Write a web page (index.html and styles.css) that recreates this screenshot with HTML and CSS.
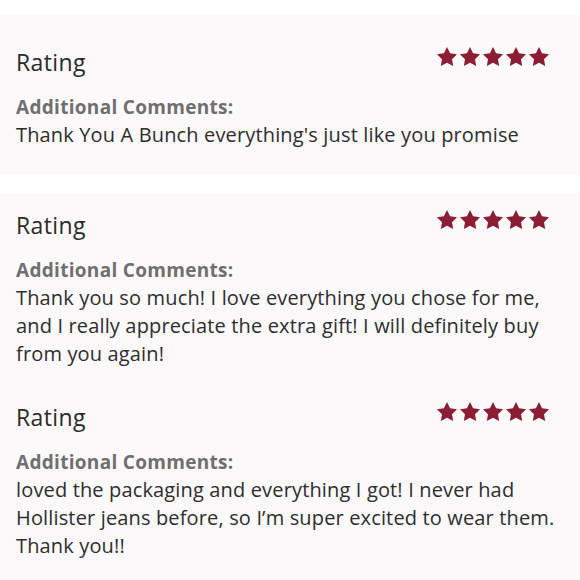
FILE: index.html
```html
<!DOCTYPE html>
<html>
<head>
<meta charset="utf-8">
<link rel="stylesheet" href="styles.css">
</head>
<body>
<section class="card card-first">
  <div class="review">
    <div class="rating-row">
      <span class="rating-label">Rating</span>
      <span class="stars">
        <svg viewBox="2 2 20 19"><polygon points="12,2 15.09,8.26 22,9.27 17,14.14 18.18,21.02 12,17.77 5.82,21.02 7,14.14 2,9.27 8.91,8.26"/></svg>
        <svg viewBox="2 2 20 19"><polygon points="12,2 15.09,8.26 22,9.27 17,14.14 18.18,21.02 12,17.77 5.82,21.02 7,14.14 2,9.27 8.91,8.26"/></svg>
        <svg viewBox="2 2 20 19"><polygon points="12,2 15.09,8.26 22,9.27 17,14.14 18.18,21.02 12,17.77 5.82,21.02 7,14.14 2,9.27 8.91,8.26"/></svg>
        <svg viewBox="2 2 20 19"><polygon points="12,2 15.09,8.26 22,9.27 17,14.14 18.18,21.02 12,17.77 5.82,21.02 7,14.14 2,9.27 8.91,8.26"/></svg>
        <svg viewBox="2 2 20 19"><polygon points="12,2 15.09,8.26 22,9.27 17,14.14 18.18,21.02 12,17.77 5.82,21.02 7,14.14 2,9.27 8.91,8.26"/></svg>
      </span>
    </div>
    <div class="comments-label">Additional Comments:</div>
    <p class="comment">Thank You A Bunch everything's just like you promise</p>
  </div>
</section>
<section class="card card-second">
  <div class="review">
    <div class="rating-row">
      <span class="rating-label">Rating</span>
      <span class="stars">
        <svg viewBox="2 2 20 19"><polygon points="12,2 15.09,8.26 22,9.27 17,14.14 18.18,21.02 12,17.77 5.82,21.02 7,14.14 2,9.27 8.91,8.26"/></svg>
        <svg viewBox="2 2 20 19"><polygon points="12,2 15.09,8.26 22,9.27 17,14.14 18.18,21.02 12,17.77 5.82,21.02 7,14.14 2,9.27 8.91,8.26"/></svg>
        <svg viewBox="2 2 20 19"><polygon points="12,2 15.09,8.26 22,9.27 17,14.14 18.18,21.02 12,17.77 5.82,21.02 7,14.14 2,9.27 8.91,8.26"/></svg>
        <svg viewBox="2 2 20 19"><polygon points="12,2 15.09,8.26 22,9.27 17,14.14 18.18,21.02 12,17.77 5.82,21.02 7,14.14 2,9.27 8.91,8.26"/></svg>
        <svg viewBox="2 2 20 19"><polygon points="12,2 15.09,8.26 22,9.27 17,14.14 18.18,21.02 12,17.77 5.82,21.02 7,14.14 2,9.27 8.91,8.26"/></svg>
      </span>
    </div>
    <div class="comments-label">Additional Comments:</div>
    <p class="comment">Thank you so much! I love everything you chose for me,<br>and I really appreciate the extra gift! I will definitely buy<br>from you again!</p>
  </div>
  <div class="review">
    <div class="rating-row">
      <span class="rating-label">Rating</span>
      <span class="stars">
        <svg viewBox="2 2 20 19"><polygon points="12,2 15.09,8.26 22,9.27 17,14.14 18.18,21.02 12,17.77 5.82,21.02 7,14.14 2,9.27 8.91,8.26"/></svg>
        <svg viewBox="2 2 20 19"><polygon points="12,2 15.09,8.26 22,9.27 17,14.14 18.18,21.02 12,17.77 5.82,21.02 7,14.14 2,9.27 8.91,8.26"/></svg>
        <svg viewBox="2 2 20 19"><polygon points="12,2 15.09,8.26 22,9.27 17,14.14 18.18,21.02 12,17.77 5.82,21.02 7,14.14 2,9.27 8.91,8.26"/></svg>
        <svg viewBox="2 2 20 19"><polygon points="12,2 15.09,8.26 22,9.27 17,14.14 18.18,21.02 12,17.77 5.82,21.02 7,14.14 2,9.27 8.91,8.26"/></svg>
        <svg viewBox="2 2 20 19"><polygon points="12,2 15.09,8.26 22,9.27 17,14.14 18.18,21.02 12,17.77 5.82,21.02 7,14.14 2,9.27 8.91,8.26"/></svg>
      </span>
    </div>
    <div class="comments-label">Additional Comments:</div>
    <p class="comment">loved the packaging and everything I got! I never had<br>Hollister jeans before, so I’m super excited to wear them.<br>Thank you!!</p>
  </div>
</section>
</body>
</html>
```

FILE: styles.css
```css
html, body {
  margin: 0;
  padding: 0;
  background: #ffffff;
}
body {
  width: 580px;
  height: 580px;
  overflow: hidden;
  font-family: "Open Sans", "Liberation Sans", sans-serif;
  color: #2e2e2e;
}
.card {
  background: #fcf9fa;
  padding: 0 31px 0 16px;
}
.card-first {
  margin-top: 15px;
  padding-top: 33px;
  padding-bottom: 26px;
}
.card-second {
  margin-top: 18px;
  padding-top: 18px;
  padding-bottom: 20px;
  display: flex;
  flex-direction: column;
  gap: 35px;
}
.rating-row {
  display: flex;
  justify-content: space-between;
  align-items: flex-start;
  height: 28px;
}
.rating-label {
  font-size: 23px;
  line-height: 28px;
  letter-spacing: 0.4px;
  color: #2b2b2b;
}
.stars {
  display: flex;
  gap: 3px;
  margin-top: -1px;
}
.stars svg {
  width: 20px;
  height: 19px;
  fill: #8b1e35;
  display: block;
}
.comments-label {
  margin-top: 17px;
  font-size: 19px;
  font-weight: 700;
  line-height: 28px;
  letter-spacing: 0.3px;
  color: #6f6f6f;
}
.comment {
  margin: 0;
  font-size: 20px;
  line-height: 28px;
  letter-spacing: 0.15px;
  white-space: nowrap;
  color: #2e2e2e;
}
```
